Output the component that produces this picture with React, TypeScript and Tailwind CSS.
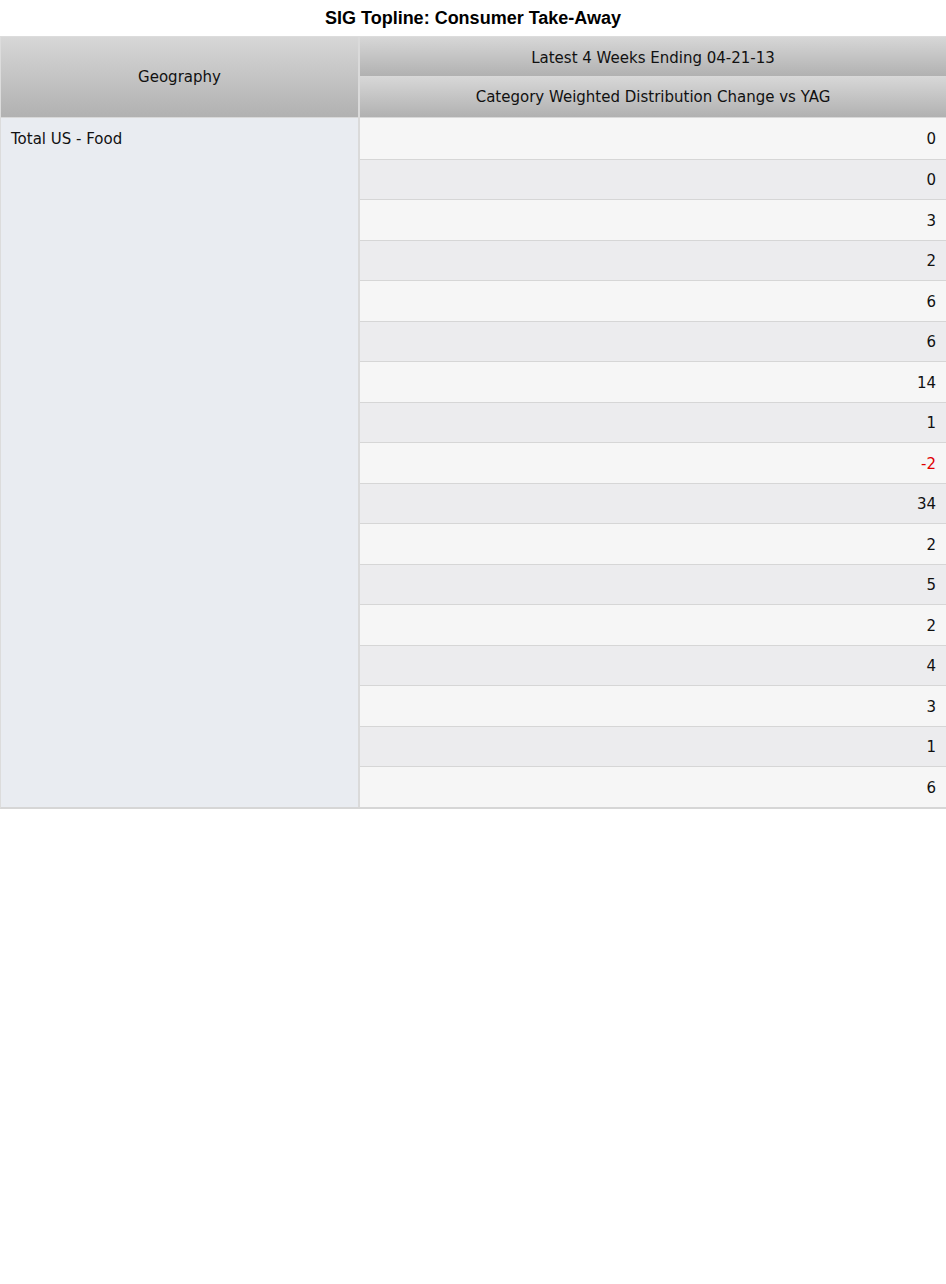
const values = [0, 0, 3, 2, 6, 6, 14, 1, -2, 34, 2, 5, 2, 4, 3, 1, 6];

const headerBg = "bg-[linear-gradient(to_bottom,#d7d7d7,#b1b1b1)]";

export default function App() {
  return (
    <div className="min-h-[1284px] w-[946px] bg-white font-['DejaVu_Sans',Verdana,sans-serif] text-[15px] text-[#111]">
      <h1 className="flex h-[36px] items-center justify-center font-['Liberation_Sans',Arial,sans-serif] text-[18px] font-bold text-black">
        SIG Topline: Consumer Take-Away
      </h1>

      <div className="flex border-t border-l border-[#dcdcdc] border-b-2 border-b-[#d6d6d6]">
        {/* left column */}
        <div className="flex w-[359px] flex-col border-r-2 border-[#dadada]">
          <div className={`flex h-[81px] items-center justify-center border-b border-[#d8d8d8] ${headerBg}`}>
            Geography
          </div>
          <div className="flex-1 bg-[#e9ecf1] px-[10px] pt-[10px]">Total US - Food</div>
        </div>

        {/* right column */}
        <div className="flex flex-1 flex-col">
          <div className={`flex h-[40px] items-center justify-center border-b border-[#d8d8d8] pt-[3px] ${headerBg}`}>
            Latest 4 Weeks Ending 04-21-13
          </div>
          <div className={`flex h-[41px] items-center justify-center border-b border-[#d8d8d8] pt-[1px] ${headerBg}`}>
            Category Weighted Distribution Change vs YAG
          </div>
          {values.map((v, i) => (
            <div
              key={i}
              className={`flex h-[40.5px] items-center justify-end pt-[2px] pr-[10px] ${
                i > 0 ? "border-t border-[#d6d6d6]" : ""
              } ${i % 2 === 0 ? "bg-[#f6f6f6]" : "bg-[#ececee]"} ${v < 0 ? "text-[#e00000]" : ""}`}
            >
              {v}
            </div>
          ))}
        </div>
      </div>
    </div>
  );
}
